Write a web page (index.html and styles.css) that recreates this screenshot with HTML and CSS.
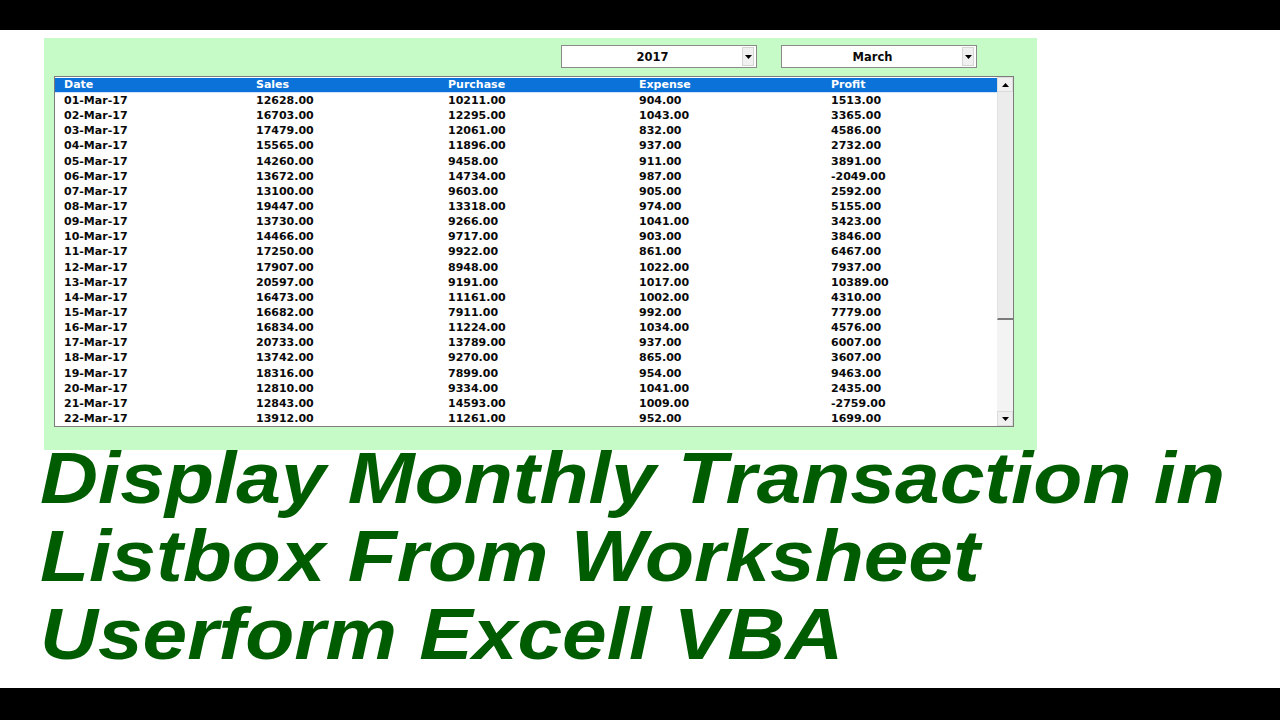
FILE: index.html
```html
<!DOCTYPE html>
<html lang="en">
<head>
<meta charset="utf-8">
<title>Display Monthly Transaction in Listbox</title>
<link rel="stylesheet" href="styles.css">
</head>
<body>
<div class="page">
  <div class="bar-top"></div>
  <div class="content">
    <div class="panel">
      <div class="combos">
        <div class="combo"><span class="combo-text">2017</span><span class="combo-btn"><svg width="7" height="4" viewBox="0 0 7 4"><path d="M0 0h7L3.5 4z" fill="#000"/></svg></span></div>
        <div class="combo"><span class="combo-text">March</span><span class="combo-btn"><svg width="7" height="4" viewBox="0 0 7 4"><path d="M0 0h7L3.5 4z" fill="#000"/></svg></span></div>
      </div>
      <div class="listbox">
        <div class="list-main">
          <div class="row head"><span>Date</span><span>Sales</span><span>Purchase</span><span>Expense</span><span>Profit</span></div>
          <div class="row"><span>01-Mar-17</span><span>12628.00</span><span>10211.00</span><span>904.00</span><span>1513.00</span></div>
          <div class="row"><span>02-Mar-17</span><span>16703.00</span><span>12295.00</span><span>1043.00</span><span>3365.00</span></div>
          <div class="row"><span>03-Mar-17</span><span>17479.00</span><span>12061.00</span><span>832.00</span><span>4586.00</span></div>
          <div class="row"><span>04-Mar-17</span><span>15565.00</span><span>11896.00</span><span>937.00</span><span>2732.00</span></div>
          <div class="row"><span>05-Mar-17</span><span>14260.00</span><span>9458.00</span><span>911.00</span><span>3891.00</span></div>
          <div class="row"><span>06-Mar-17</span><span>13672.00</span><span>14734.00</span><span>987.00</span><span>-2049.00</span></div>
          <div class="row"><span>07-Mar-17</span><span>13100.00</span><span>9603.00</span><span>905.00</span><span>2592.00</span></div>
          <div class="row"><span>08-Mar-17</span><span>19447.00</span><span>13318.00</span><span>974.00</span><span>5155.00</span></div>
          <div class="row"><span>09-Mar-17</span><span>13730.00</span><span>9266.00</span><span>1041.00</span><span>3423.00</span></div>
          <div class="row"><span>10-Mar-17</span><span>14466.00</span><span>9717.00</span><span>903.00</span><span>3846.00</span></div>
          <div class="row"><span>11-Mar-17</span><span>17250.00</span><span>9922.00</span><span>861.00</span><span>6467.00</span></div>
          <div class="row"><span>12-Mar-17</span><span>17907.00</span><span>8948.00</span><span>1022.00</span><span>7937.00</span></div>
          <div class="row"><span>13-Mar-17</span><span>20597.00</span><span>9191.00</span><span>1017.00</span><span>10389.00</span></div>
          <div class="row"><span>14-Mar-17</span><span>16473.00</span><span>11161.00</span><span>1002.00</span><span>4310.00</span></div>
          <div class="row"><span>15-Mar-17</span><span>16682.00</span><span>7911.00</span><span>992.00</span><span>7779.00</span></div>
          <div class="row"><span>16-Mar-17</span><span>16834.00</span><span>11224.00</span><span>1034.00</span><span>4576.00</span></div>
          <div class="row"><span>17-Mar-17</span><span>20733.00</span><span>13789.00</span><span>937.00</span><span>6007.00</span></div>
          <div class="row"><span>18-Mar-17</span><span>13742.00</span><span>9270.00</span><span>865.00</span><span>3607.00</span></div>
          <div class="row"><span>19-Mar-17</span><span>18316.00</span><span>7899.00</span><span>954.00</span><span>9463.00</span></div>
          <div class="row"><span>20-Mar-17</span><span>12810.00</span><span>9334.00</span><span>1041.00</span><span>2435.00</span></div>
          <div class="row"><span>21-Mar-17</span><span>12843.00</span><span>14593.00</span><span>1009.00</span><span>-2759.00</span></div>
          <div class="row"><span>22-Mar-17</span><span>13912.00</span><span>11261.00</span><span>952.00</span><span>1699.00</span></div>
        </div>
        <div class="scrollbar">
          <div class="sb-btn"><svg width="7" height="4" viewBox="0 0 7 4"><path d="M0 4h7L3.5 0z" fill="#000"/></svg></div>
          <div class="sb-track"><div class="sb-thumb"></div></div>
          <div class="sb-btn"><svg width="7" height="4" viewBox="0 0 7 4"><path d="M0 0h7L3.5 4z" fill="#000"/></svg></div>
        </div>
      </div>
    </div>
    <h1 class="title">Display Monthly Transaction in<br>Listbox From Worksheet<br>Userform Excell VBA</h1>
  </div>
  <div class="bar-bottom"></div>
</div>
</body>
</html>
```

FILE: styles.css
```css
* { box-sizing: border-box; }
html, body { margin: 0; padding: 0; background: #fff; }
.page {
  width: 1280px;
  height: 720px;
  display: flex;
  flex-direction: column;
  overflow: hidden;
}
.bar-top { height: 30px; background: #000; flex: none; }
.bar-bottom { height: 32px; background: #000; flex: none; }
.content { flex: 1; padding-top: 8px; }

.panel {
  margin-left: 44px;
  width: 993px;
  height: 412px;
  background: #c6fac6;
  padding: 7px 0 0 10px;
  font-family: "DejaVu Sans", Verdana, sans-serif;
  font-weight: bold;
  font-size: 11px;
  color: #0a0a0a;
}
.combos {
  display: flex;
  justify-content: flex-end;
  gap: 24px;
  padding-right: 60px;
  height: 23px;
}
.combo {
  width: 196px;
  height: 23px;
  background: #fff;
  border: 1px solid #8a8a8a;
  display: flex;
  align-items: stretch;
  padding: 1px 2px 1px 1px;
}
.combo-text {
  flex: 1;
  display: flex;
  align-items: center;
  justify-content: center;
  font-size: 11.5px;
}
.combo-btn {
  width: 12px;
  background: #f0f0f0;
  border: 1px solid #d6d6d6;
  display: flex;
  align-items: center;
  justify-content: center;
}

.listbox {
  margin-top: 8px;
  width: 960px;
  height: 351px;
  border: 1px solid #7c7c7c;
  background: #fff;
  display: flex;
}
.list-main { flex: 1; padding-top: 1px; }
.row {
  display: grid;
  grid-template-columns: 192px 192px 191px 192px 1fr;
  padding-left: 9px;
  height: 15.15px;
  line-height: 15px;
  white-space: nowrap;
}
.row.head {
  background: #0a72d8;
  color: #fff;
  height: 14px;
  line-height: 14px;
  border-bottom: 1px solid #cfe4f8;
  box-sizing: content-box;
}

.scrollbar {
  width: 16px;
  display: flex;
  flex-direction: column;
  background: #f3f3f3;
}
.sb-btn {
  height: 15px;
  flex: none;
  display: flex;
  align-items: center;
  justify-content: center;
  background: #f0f0f0;
  border: 1px solid #dcdcdc;
}
.sb-track { flex: 1; }
.sb-thumb {
  height: 228px;
  background: #ececec;
  border-left: 1px solid #e2e2e2;
  border-bottom: 2px solid #7a7a7a;
}

.title {
  margin: -11px 0 0 40px;
  font-family: "Liberation Sans", Arial, sans-serif;
  font-weight: bold;
  font-style: italic;
  font-size: 72px;
  line-height: 78px;
  color: #005c00;
  white-space: nowrap;
  transform: scaleX(1.115);
  transform-origin: 0 0;
}
```
